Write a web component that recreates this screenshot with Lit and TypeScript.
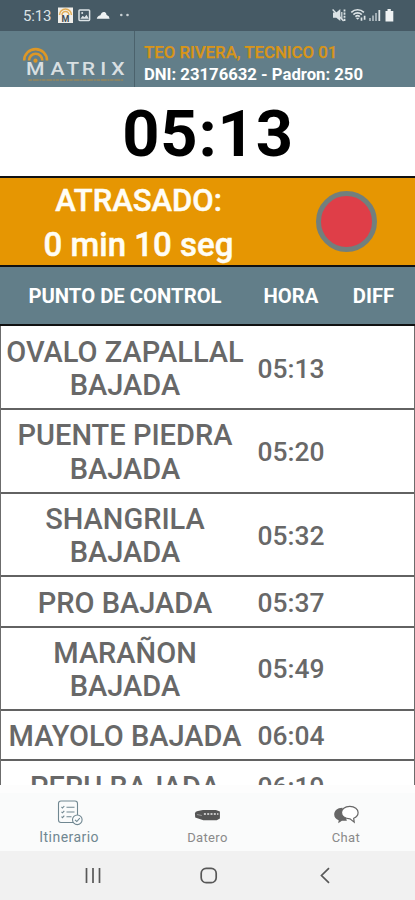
import { LitElement, html, css, svg } from "lit";
import { customElement } from "lit/decorators.js";

interface Stop {
  lines: string[];
  hora: string;
}

const STOPS: Stop[] = [
  { lines: ["OVALO ZAPALLAL", "BAJADA"], hora: "05:13" },
  { lines: ["PUENTE PIEDRA", "BAJADA"], hora: "05:20" },
  { lines: ["SHANGRILA", "BAJADA"], hora: "05:32" },
  { lines: ["PRO BAJADA"], hora: "05:37" },
  { lines: ["MARAÑON", "BAJADA"], hora: "05:49" },
  { lines: ["MAYOLO BAJADA"], hora: "06:04" },
  { lines: ["PERU BAJADA"], hora: "06:19" },
];

@customElement("status-bar")
class StatusBar extends LitElement {
  static styles = css`
    :host { display: flex; height: 31px; background: #465a65; color: #dce3e6; align-items: center; font-size: 15px; box-sizing: border-box; padding: 0 19px 0 23px; }
    .time { width: 34px; letter-spacing: -0.2px; }
    .left { width: 75px; height: 17px; }
    .gap { flex: 1; }
    .right { width: 66px; height: 17px; }
    .mark { font-size: 9px; font-weight: 700; fill: #3f4c52; text-anchor: middle; }
  `;
  render() {
    return html`
      <span class="time">5:13</span>
      <svg class="left" viewBox="57 7 75 17">
        <rect x="58" y="7.5" width="15" height="15.5" fill="#f1efea" />
        <path d="M59.5 15a6 6 0 0 1 12 0M62 15a3.5 3.5 0 0 1 7 0" fill="none" stroke="#e2ad55" stroke-width="1.5" />
        <text class="mark" x="65.5" y="22">M</text>
        <rect x="79" y="10" width="10.6" height="10.4" rx="0.8" fill="none" stroke="#dce3e6" stroke-width="1.5" />
        <path d="M80.3 18.7l2.4-3 1.8 1.6 2-2.5 2.3 3.9z" fill="#dce3e6" />
        <circle cx="82.2" cy="13" r="1" fill="#dce3e6" />
        <path d="M96.8 18.8q.1-2.6 3.6-3.6 1.4-3.8 4.2-3.2 1.8.4 2 3 2.8.8 3 3.8z" fill="#eef2f3" />
        <circle cx="121.3" cy="15" r="1.3" fill="#c8d0d4" />
        <circle cx="127.5" cy="15" r="1.3" fill="#c8d0d4" />
      </svg>
      <span class="gap"></span>
      <svg class="right" viewBox="330 7 66 17">
        <path d="M333 12.5h3.3l4-3.4v12l-4-3.4H333z" fill="#dce3e6" />
        <path d="M332.6 9.5l11 11.5" stroke="#dce3e6" stroke-width="1.4" />
        <path d="M344.5 9.5v11.5" stroke="#dce3e6" stroke-width="1.8" stroke-dasharray="2.1 1" />
        <path d="M341.8 12v7" stroke="#dce3e6" stroke-width="1.2" />
        <path d="M351.3 12.3a9.2 9.2 0 0 1 12.6 0M353.4 14.6a6 6 0 0 1 8.4 0M355.4 16.7a3.2 3.2 0 0 1 4.4 0" fill="none" stroke="#dce3e6" stroke-width="1.6" />
        <path d="M357.6 19.7l-2-2h4z" fill="#dce3e6" />
        <path d="M361.5 20.8v-3.2M364.6 15.8v4" stroke="#dce3e6" stroke-width="1.7" />
        <path d="M370 21v-3M373 21v-5.5M376 21v-8" stroke="#9eabb2" stroke-width="2" />
        <path d="M379.3 21V10" stroke="#dce3e6" stroke-width="1.8" />
        <path d="M385.5 11h2V9h3.3v2h2.5v10.5h-7.8z" fill="#eef2f3" />
      </svg>`;
  }
}

@customElement("app-header")
class AppHeader extends LitElement {
  static styles = css`
    :host { display: flex; height: 56px; background: #627e89; }
    .brand { width: 134px; border-right: 1px solid #4b626c; }
    .logo { display: block; width: 134px; height: 56px; }
    .word { font-size: 18.4px; font-weight: 500; fill: #d8dfe1; text-anchor: middle; }
    .info { padding: 10px 0 0 9px; font-weight: 700; line-height: 22.5px; white-space: nowrap; }
    .driver { color: #d89518; font-weight: 500; font-size: 16.8px; -webkit-text-stroke: 0.25px #d89518; }
    .dni { color: #fff; font-size: 16.7px; }
  `;
  render() {
    return html`
      <div class="brand">
        <svg class="logo" viewBox="0 31 134 56">
          <g fill="none" stroke="#dd9726" stroke-width="2.6">
            <path d="M24.2 60.5a11.4 11.4 0 0 1 22.8 0" />
            <path d="M29 60.5a6.7 6.7 0 0 1 13.4 0" />
          </g>
          <circle cx="35.5" cy="60.7" r="2.1" fill="#dd9726" />
          <text class="word" transform="scale(1.15 1)" x="30.7 50 63.2 77 89.8 102.6" y="75.4">MATRIX</text>
          <path d="M28.5 80h95" stroke="#b18a45" stroke-width="1.2" stroke-dasharray="3.5 0.8 6 0.7 2 0.6" />
        </svg>
      </div>
      <div class="info">
        <div class="driver">TEO RIVERA, TECNICO 01</div>
        <div class="dni">DNI: 23176632 - Padron: 250</div>
      </div>`;
  }
}

@customElement("status-panel")
class StatusPanel extends LitElement {
  static styles = css`
    :host { display: block; }
    .clock { height: 89px; background: #fff; color: #000; font-weight: 700; font-size: 65px; letter-spacing: 0.8px; line-height: 95px; text-align: center; padding-left: 1px; }
    .late { box-sizing: border-box; height: 91px; background: #e69602; border-top: 2px solid #111; border-bottom: 2px solid #111; display: grid; grid-template-columns: 277px 138px; grid-template-rows: 87px; align-items: start; }
    .text { padding-top: 1px; color: #fffdf5; font-weight: 500; font-size: 31px; line-height: 44px; text-align: center; -webkit-text-stroke: 0.5px #fffdf5; }
    .delay { font-size: 33px; }
    .lamp { box-sizing: border-box; width: 61px; height: 61px; margin-top: 13px; border: 5px solid #727f7d; border-radius: 50%; background: #df3e48; justify-self: center; }
  `;
  render() {
    return html`
      <div class="clock">05:13</div>
      <div class="late">
        <div class="text"><div>ATRASADO:</div><div class="delay">0 min 10 seg</div></div>
        <div class="lamp"></div>
      </div>`;
  }
}

@customElement("stop-table")
class StopTable extends LitElement {
  static styles = css`
    :host { display: flex; flex-direction: column; height: 518px; overflow: hidden; background: #fff; }
    .head, .row { display: grid; grid-template-columns: 248px 84px 81px; align-items: center; text-align: center; }
    .head { flex: none; box-sizing: border-box; height: 59px; padding: 0 1px; background: #627e89; color: #fff; font-weight: 700; font-size: 20.3px; border-bottom: 2px solid #111; }
    .rows { border: solid #6c6c6c; border-width: 0 1px; padding-top: 0.7px; }
    .row { box-sizing: border-box; padding: 9.2px 0 5.7px; border-bottom: 2px solid #626262; color: #686868; font-weight: 500; white-space: nowrap; }
    .name { font-size: 29px; line-height: 33.35px; }
    .hora { font-size: 26.4px; line-height: 33.35px; }
  `;
  render() {
    return html`
      <div class="head"><span>PUNTO DE CONTROL</span><span>HORA</span><span>DIFF</span></div>
      <div class="rows">
        ${STOPS.map(
          (s) => html`<div class="row">
            <div class="name">${s.lines.map((l) => html`<div>${l}</div>`)}</div>
            <div class="hora">${s.hora}</div>
            <div></div>
          </div>`
        )}
      </div>`;
  }
}

const ICONS = {
  list: svg`
    <g fill="none" stroke="#708791" stroke-width="1.1">
      <rect x="2.5" y="1" width="19" height="21.5" rx="2.5" />
      <path d="M10.5 7.2h8M10.5 12h8M10.5 16.8h5" />
      <path d="M5.5 7l1 1 1.8-2M5.5 11.8l1 1 1.8-2M5.5 16.6l1 1 1.8-2" />
      <circle cx="21.3" cy="19.8" r="4.8" fill="#fafcfd" />
      <path d="M19 19.8l1.8 1.7 3-3.3" />
    </g>`,
  bus: svg`
    <g transform="translate(.4 1)">
      <path d="M.5 12.2q.3-2 3-2.2l5-1h13l4 1.6v6.8l-3.2 1.9H9L.8 16.5z" fill="#555" />
      <path d="M9.5 13.1h14.5" stroke="#c4c4c4" stroke-width="2" stroke-dasharray="2 1.3" />
      <path d="M2.5 13.5l5 1" stroke="#999" />
    </g>`,
  chat: svg`
    <g transform="translate(.4 1)">
      <path d="M10 6.8C4.8 6.8 1.8 10 1.8 13.5c0 2.8 1.8 4.8 4.5 5.7l-.5 3 3.7-2.5h5z" fill="#666" />
      <path d="M17.4 5.4c5 0 8.3 2.7 8.3 6.2 0 2.7-1.7 4.7-4.4 5.7l.5 3.8-4.2-3.3c-5.2 0-8.5-2.5-8.5-6.2 0-3.5 3.3-6.2 8.3-6.2z" fill="#fff" stroke="#666" stroke-width="1.2" />
    </g>`,
};

@customElement("tab-bar")
class TabBar extends LitElement {
  static styles = css`
    :host { display: grid; grid-template-columns: repeat(3, 1fr); height: 58px; background: #fafbfb; }
    .tab { display: flex; flex-direction: column; align-items: center; padding-top: 7px; gap: 2.5px; color: #8a8a8a; font-size: 13px; line-height: 16px; letter-spacing: 0.35px; }
    .on { gap: 1.5px; color: #708791; font-size: 14px; letter-spacing: 0.45px; }
    .icon { width: 27px; height: 27px; }
  `;
  render() {
    return html`
      <div class="tab on"><svg class="icon" viewBox="0 0 27 27">${ICONS.list}</svg><span>Itinerario</span></div>
      <div class="tab"><svg class="icon" viewBox="0 0 27 27">${ICONS.bus}</svg><span>Datero</span></div>
      <div class="tab"><svg class="icon" viewBox="0 0 27 27">${ICONS.chat}</svg><span>Chat</span></div>`;
  }
}

@customElement("system-nav")
class SystemNav extends LitElement {
  static styles = css`
    :host { display: block; height: 49px; background: #f1f1f1; }
    .keys { display: block; width: 415px; height: 49px; }
  `;
  render() {
    return html`<svg class="keys" viewBox="0 851 415 49">
      <g fill="none" stroke="#585858" stroke-width="1.7">
        <path d="M86.5 868v15M93 868v15M99.5 868v15" />
        <rect x="201.2" y="868.3" width="15" height="14.4" rx="5" />
        <path d="M329 868.2l-7.5 7.3 7.5 7.3" />
      </g>
    </svg>`;
  }
}

@customElement("app-root")
class AppRoot extends LitElement {
  static styles = css`
    :host { display: flex; flex-direction: column; width: 415px; height: 900px; overflow: hidden; background: #fff; font-family: Roboto, "Liberation Sans", sans-serif; }
    .spacer { flex: 1; background: #fdfdfd; }
  `;
  render() {
    return html`
      <status-bar></status-bar>
      <app-header></app-header>
      <status-panel></status-panel>
      <stop-table></stop-table>
      <div class="spacer"></div>
      <tab-bar></tab-bar>
      <system-nav></system-nav>`;
  }
}
